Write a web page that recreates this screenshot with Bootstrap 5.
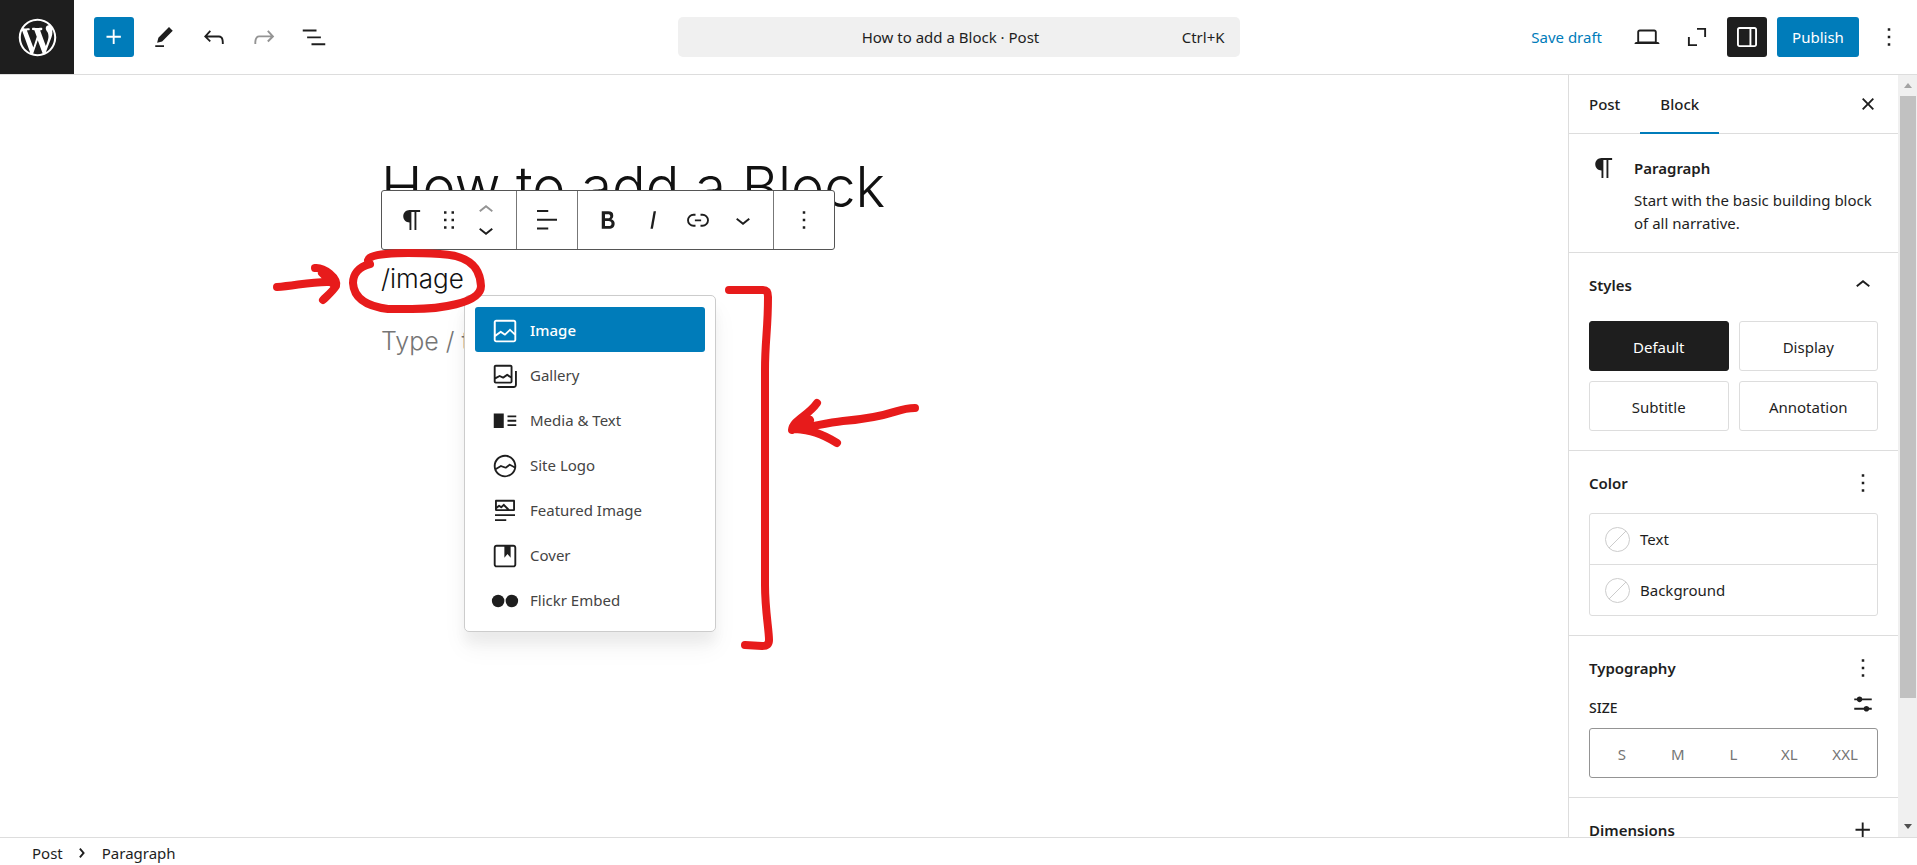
<!DOCTYPE html>
<html lang="en">
<head>
<meta charset="utf-8">
<meta name="viewport" content="width=device-width, initial-scale=1">
<title>How to add a Block · Post</title>
<link href="https://cdn.jsdelivr.net/npm/bootstrap@5.3.0/dist/css/bootstrap.min.css" rel="stylesheet">
<style>
:root{--ink:#1e1e1e;--accent:#007cba;--rule:#ddd}
body{font-family:"Noto Sans","Open Sans",sans-serif;font-size:15px;line-height:23px;color:var(--ink);background:#fff}
.ico{width:30px;height:30px;fill:currentColor;flex:none;display:block}
.topbar{height:75px;border-bottom:1px solid var(--rule)}
.wp-home{width:74px;margin-right:10px;background:var(--ink);color:#fff}
.wp-home svg{width:45px;height:45px;fill:currentColor}
.tool{width:40px;height:40px;padding:0;border:0;border-radius:3px;color:var(--ink);background:none;display:flex;align-items:center;justify-content:center;flex:none}
.tool:disabled{color:#949494}
.tool-accent{background:var(--accent);color:#fff}
.tool-dark{background:var(--ink);color:#fff}
.gap-tools{gap:10px}
.side-group{flex:1 1 0}
.doc-bar{width:562px;height:40px;border:0;border-radius:5px;background:#f0f0f0;color:var(--ink);padding:0 15px;display:grid;grid-template-columns:1fr auto 1fr;align-items:center}
.save-draft{color:var(--accent);padding:0 15px;border:0;background:none}
.publish{background:var(--accent);color:#fff;height:40px;width:82px;padding:0;border:0;border-radius:3px}
.workspace{min-height:0}
.canvas{padding-top:80px;font-family:"Inter",sans-serif;font-weight:300;color:#111}
.column{width:806px;max-width:100%}
.post-title{font-size:56px;line-height:64px;font-weight:300;margin:0 0 41px}
.para{font-size:26px;line-height:38px;margin:0 0 24px}
.para-hint{color:#757575;font-size:25px}
.block-toolbar{left:0;top:35px;height:60px;border:1px solid #555;border-radius:3px;background:#fff;color:var(--ink)}
.block-toolbar .part{display:flex;align-items:center;border-right:1px solid #777;padding:0 8px 0 7px}
.block-toolbar .part:first-child{padding:0 10px}
.block-toolbar .part:last-child{border-right:0}
.block-toolbar .grip{width:34px}
.block-toolbar .mover{width:40px;height:20px;overflow:hidden}
.block-toolbar .fmt{width:45px}
.inserter{left:83px;top:140px;width:252px;padding:11px 10px 9px;border:1px solid #ccc;border-radius:5px;background:#fff;box-shadow:0 12px 12px rgba(0,0,0,.04),0 16px 24px rgba(0,0,0,.05);font-family:"Noto Sans",sans-serif;font-weight:400}
.inserter button{height:45px;border:0;border-radius:3px;background:none;padding:2px 15px 0;color:#444;text-align:left;gap:10px}
.inserter svg{color:var(--ink)}
.inserter .chosen{background:var(--accent);color:#fff;font-weight:500}
.inserter .chosen svg{color:#fff}
.pen-marks{left:-121px;top:70px;width:700px;height:440px;pointer-events:none;fill:none;stroke:#e71b1b;stroke-width:8;stroke-linecap:round;stroke-linejoin:round}
.inspector{width:330px;border-left:1px solid var(--rule);overflow:hidden}
.tabs-row{height:59px;border-bottom:1px solid var(--rule);padding-right:15px}
.tabs-row .tab{height:59px;border:0;border-bottom:2px solid transparent;background:none;padding:3px 20px 0;font-weight:500;color:var(--ink)}
.tabs-row .tab.current{border-bottom-color:var(--accent)}
.panel{padding:20px 20px 19px;border-bottom:1px solid var(--rule)}
.panel h2,.block-card h2{font-size:15px;font-weight:600;margin:0}
.panel-head{height:24px}
.panel-head button,.size-row button{border:0;background:none;padding:0;color:var(--ink)}
.block-card{padding:19px 20px 17px;gap:15px;border-bottom:1px solid var(--rule)}
.block-card h2{line-height:30px;margin-bottom:6px}
.style-grid{margin-top:24px;display:grid;grid-template-columns:1fr 1fr;gap:10px}
.style-grid button{height:50px;border:1px solid var(--rule);border-radius:3px;background:#fff;color:var(--ink);padding:2px 0 0}
.style-grid .chosen{background:var(--ink);border-color:var(--ink);color:#fff}
.swatches{margin-top:18px;border:1px solid var(--rule);border-radius:3px}
.swatches button{height:50px;border:0;background:none;padding:0 15px;gap:10px;color:var(--ink)}
.swatches button:first-child{height:51px;border-bottom:1px solid var(--rule)}
.swatches svg{width:25px;height:25px;fill:none;stroke:#ccc}
.size-row{margin-top:16px;height:24px}
.size-row h3{font-size:14px;font-weight:500;line-height:24px;margin:0}
.sizes{margin-top:8px;height:50px;border:1px solid #949494;border-radius:3px;padding:0 4px}
.sizes label{flex:1;text-align:center;color:#757575;line-height:50px}
.scroller{width:19px;background:#f0f0f0;padding-left:2px}
.scroller .end{height:21px;width:16px;display:flex;align-items:center;justify-content:center}
.scroller .thumb{width:16px;height:79%;background:#c1c1c1}
.crumbs{height:28px;border-top:1px solid var(--rule);padding:4px 0 0 32px}
.crumbs svg{margin:0 5px 2px 4px}
.crumbs a{color:var(--ink);text-decoration:none}
</style>
</head>
<body>
<div class="d-flex flex-column vh-100 overflow-hidden">
  <header class="topbar d-flex align-items-center flex-shrink-0">
    <div class="side-group d-flex align-items-center align-self-stretch gap-tools">
      <a href="#" class="wp-home d-flex align-items-center justify-content-center align-self-stretch" aria-label="View posts"><svg viewBox="-2 -2 24 24"><path d="M20 10c0-5.51-4.49-10-10-10C4.48 0 0 4.49 0 10c0 5.52 4.48 10 10 10 5.51 0 10-4.48 10-10zM7.78 15.37L4.37 6.22c.55-.02 1.17-.08 1.17-.08.5-.06.44-1.13-.06-1.11 0 0-1.45.11-2.37.11-.18 0-.37 0-.58-.01C4.12 2.69 6.87 1.11 10 1.11c2.33 0 4.45.87 6.05 2.34-.68-.11-1.65.39-1.65 1.58 0 .74.45 1.36.9 2.1.35.61.55 1.36.55 2.46 0 1.49-1.4 5-1.4 5l-3.03-8.37c.54-.02.82-.17.82-.17.5-.05.44-1.25-.06-1.22 0 0-1.44.12-2.38.12-.87 0-2.33-.12-2.33-.12-.5-.03-.56 1.2-.06 1.22l.92.08 1.26 3.41zM17.41 10c.24-.64.74-1.87.43-4.25.7 1.29 1.05 2.71 1.05 4.25 0 3.29-1.73 6.24-4.4 7.78.97-2.59 1.94-5.2 2.92-7.78zM6.1 18.09C3.12 16.65 1.11 13.53 1.11 10c0-1.3.23-2.48.72-3.59C3.25 10.3 4.67 14.2 6.1 18.09zm4.03-6.63l2.58 6.98c-.86.29-1.76.45-2.71.45-.79 0-1.57-.11-2.29-.33.81-2.38 1.62-4.74 2.42-7.1z"/></svg></a>
      <button class="tool tool-accent" aria-label="Block inserter"><svg class="ico" viewBox="0 0 24 24"><path d="M11 12.5V17.5H12.5V12.5H17.5V11H12.5V6H11V11H6V12.5H11Z"/></svg></button>
      <button class="tool" aria-label="Tools"><svg class="ico" viewBox="0 0 24 24"><path d="m19 7-3-3-8.5 8.5-1 4 4-1L19 7Zm-7 11.5H5V20h7v-1.5Z"/></svg></button>
      <button class="tool" aria-label="Undo"><svg class="ico" viewBox="0 0 24 24"><path d="M18.3 11.7c-.6-.6-1.4-.9-2.3-.9H6.7l2.9-3.3-1.1-1-4.5 5L8.5 16l1-1-2.7-2.7H16c.5 0 .9.2 1.3.5 1 1 1 3.4 1 4.5v.3h1.5v-.2c0-1.5 0-4.3-1.5-5.7z"/></svg></button>
      <button class="tool" aria-label="Redo" disabled><svg class="ico" viewBox="0 0 24 24"><path d="M15.6 6.5l-1.1 1 2.9 3.3H8c-.9 0-1.7.3-2.3.9-1.4 1.5-1.4 4.2-1.4 5.6v.2h1.5v-.3c0-1.1 0-3.5 1-4.5.3-.3.7-.5 1.3-.5h9.2L14.5 15l1.1 1.1 4.6-4.6-4.6-5z"/></svg></button>
      <button class="tool" aria-label="Document overview"><svg class="ico" viewBox="0 0 24 24"><path d="M3 6h11v1.5H3V6Zm3.5 5.5h11V13h-11v-1.5ZM21 17H10v1.5h11V17Z"/></svg></button>
    </div>
    <button class="doc-bar"><span></span><span class="pe-3">How to add a Block · Post</span><span class="text-end">Ctrl+K</span></button>
    <div class="side-group d-flex align-items-center justify-content-end gap-tools">
      <button class="save-draft">Save draft</button>
      <button class="tool" aria-label="View"><svg class="ico" viewBox="0 0 24 24"><path d="M20.5 16h-.7V8c0-1.1-.9-2-2-2H6.2c-1.1 0-2 .9-2 2v8h-.7c-.8 0-1.5.7-1.5 1.5h20c0-.8-.7-1.5-1.5-1.5zM5.7 8c0-.3.2-.5.5-.5h11.6c.3 0 .5.2.5.5v7.6H5.7V8z"/></svg></button>
      <button class="tool" aria-label="Zoom out"><svg class="ico" viewBox="0 0 24 24"><path d="M12 5.5h6.5V12M5.5 12v6.5H12" fill="none" stroke="currentColor" stroke-width="1.5"/></svg></button>
      <button class="tool tool-dark" aria-label="Settings"><svg class="ico" viewBox="0 0 24 24"><path fill-rule="evenodd" d="M18 4H6c-1.1 0-2 .9-2 2v12c0 1.1.9 2 2 2h12c1.1 0 2-.9 2-2V6c0-1.1-.9-2-2-2zm-4 14.5H6c-.3 0-.5-.2-.5-.5V6c0-.3.2-.5.5-.5h8v13zm4.5-.5c0 .3-.2.5-.5.5h-2.5v-13H18c.3 0 .5.2.5.5v12z"/></svg></button>
      <button class="publish">Publish</button>
      <button class="tool me-2" aria-label="Options"><svg class="ico" viewBox="0 0 24 24"><path d="M13 19h-2v-2h2v2zm0-6h-2v-2h2v2zm0-6h-2V5h2v2z"/></svg></button>
    </div>
  </header>

  <div class="workspace d-flex flex-grow-1">
    <main class="canvas flex-grow-1 overflow-hidden">
      <div class="column position-relative mx-auto">
        <h1 class="post-title">How to add a Block</h1>
        <p class="para">/image</p>
        <p class="para para-hint">Type / to choose a block</p>

        <div class="block-toolbar position-absolute d-flex" role="toolbar" aria-label="Block tools">
          <div class="part">
            <button class="tool" aria-label="Paragraph"><svg class="ico" viewBox="0 0 24 24"><path d="m9.99609 14v-.2251l.00391.0001v6.225h1.5v-14.5h2.5v14.5h1.5v-14.5h3v-1.5h-8.50391c-2.76142 0-5 2.23858-5 5 0 2.7614 2.23858 5 5 5z"/></svg></button>
            <button class="tool grip" aria-label="Drag"><svg class="ico" viewBox="0 0 24 24"><path d="M8 7h2V5H8v2zm0 6h2v-2H8v2zm0 6h2v-2H8v2zm6-14v2h2V5h-2zm0 8h2v-2h-2v2zm0 6h2v-2h-2v2z"/></svg></button>
            <div>
              <button class="tool mover" aria-label="Move up" disabled><svg class="ico" viewBox="0 0 24 24"><path d="M6.5 12.4L12 8l5.5 4.4-.9 1.2L12 10l-4.5 3.6-1-1.2z"/></svg></button>
              <button class="tool mover" aria-label="Move down"><svg class="ico" viewBox="0 0 24 24"><path d="M17.5 11.6L12 16l-5.5-4.4.9-1.2L12 14l4.5-3.6 1 1.2z"/></svg></button>
            </div>
          </div>
          <div class="part">
            <button class="tool fmt" aria-label="Align text"><svg class="ico" viewBox="0 0 24 24"><path d="M13 5.5H4V4h9v1.5Zm7 7H4V11h16v1.5Zm-7 7H4V18h9v1.5Z"/></svg></button>
          </div>
          <div class="part">
            <button class="tool fmt" aria-label="Bold"><svg class="ico" viewBox="0 0 24 24"><path d="M14.7 11.3c1-.6 1.5-1.6 1.5-3 0-2.3-1.3-3.4-4-3.4H7v14h5.8c1.4 0 2.5-.3 3.3-1 .8-.7 1.2-1.7 1.2-2.9.1-1.9-.8-3.1-2.6-3.7zm-5.1-4h2.3c.6 0 1.1.1 1.4.4.3.3.5.7.5 1.2s-.2 1-.5 1.2c-.3.3-.8.4-1.4.4H9.6V7.3zm4.6 9c-.4.3-1 .4-1.7.4H9.6v-3.9h2.9c.7 0 1.3.2 1.7.5.4.3.6.8.6 1.5s-.2 1.2-.6 1.5z"/></svg></button>
            <button class="tool fmt" aria-label="Italic"><svg class="ico" viewBox="0 0 24 24"><path d="M12.5 5L10 19h1.9l2.5-14z"/></svg></button>
            <button class="tool fmt" aria-label="Link"><svg class="ico" viewBox="0 0 24 24"><path d="M10 17.389H8.444A5.194 5.194 0 1 1 8.444 7H10v1.5H8.444a3.694 3.694 0 0 0 0 7.389H10v1.5ZM14 7h1.556a5.194 5.194 0 0 1 0 10.39H14v-1.5h1.556a3.694 3.694 0 0 0 0-7.39H14V7Zm-4.5 6h5v-1.5h-5V13Z"/></svg></button>
            <button class="tool fmt" aria-label="More"><svg class="ico" viewBox="0 0 24 24"><path d="M17.5 11.6L12 16l-5.5-4.4.9-1.2L12 14l4.5-3.6 1 1.2z"/></svg></button>
          </div>
          <div class="part">
            <button class="tool fmt" aria-label="Options"><svg class="ico" viewBox="0 0 24 24"><path d="M13 19h-2v-2h2v2zm0-6h-2v-2h2v2zm0-6h-2V5h2v2z"/></svg></button>
          </div>
        </div>

        <div class="inserter position-absolute d-flex flex-column">
          <button class="chosen d-flex align-items-center"><svg class="ico" viewBox="0 0 24 24"><path d="M19 3H5c-1.1 0-2 .9-2 2v14c0 1.1.9 2 2 2h14c1.1 0 2-.9 2-2V5c0-1.1-.9-2-2-2zM5 4.5h14c.3 0 .5.2.5.5v8.4l-3-2.9c-.3-.3-.8-.3-1 0L11.9 14 9 12c-.3-.2-.6-.2-.8 0l-3.6 2.6V5c-.1-.3.1-.5.4-.5zm14 15H5c-.3 0-.5-.2-.5-.5v-2.4l4.1-3 3 1.9c.3.2.7.2.9-.1L16 12l3.5 3.4V19c0 .3-.2.5-.5.5z"/></svg>Image</button>
          <button class="d-flex align-items-center"><svg class="ico" viewBox="0 0 24 24"><path fill-rule="evenodd" d="M16.375 4.5H4.625a.125.125 0 0 0-.125.125v8.254l2.859-1.54a.75.75 0 0 1 .68-.016l2.384 1.142 2.89-2.074a.75.75 0 0 1 .874 0l2.313 1.66V4.625a.125.125 0 0 0-.125-.125Zm.125 9.398-2.75-1.975-2.813 2.02a.75.75 0 0 1-.76.067l-2.444-1.17L4.5 14.583v1.792c0 .069.056.125.125.125h11.75a.125.125 0 0 0 .125-.125v-2.477ZM4.625 3C3.728 3 3 3.728 3 4.625v11.75C3 17.273 3.728 18 4.625 18h11.75c.898 0 1.625-.727 1.625-1.625V4.625C18 3.728 17.273 3 16.375 3H4.625ZM20 8v11c0 .69-.31 1-.999 1H6v1.5h13.001c1.52 0 2.499-.982 2.499-2.5V8H20Z"/></svg>Gallery</button>
          <button class="d-flex align-items-center"><svg class="ico" viewBox="0 0 24 24"><path d="M3 6v11.5h8V6H3Zm11 3h7V7.5h-7V9Zm7 3.5h-7V11h7v1.5ZM14 16h7v-1.5h-7V16Z"/></svg>Media &amp; Text</button>
          <button class="d-flex align-items-center"><svg class="ico" viewBox="0 0 24 24"><path d="M12 3c-5 0-9 4-9 9s4 9 9 9 9-4 9-9-4-9-9-9zm0 1.5c4.1 0 7.5 3.4 7.5 7.5v.1c-1.4-.8-3.3-1.7-3.4-1.8-.2-.1-.5-.1-.8.1l-2.9 2.1L9 11.3c-.2-.1-.4 0-.6.1l-3.7 2.2c-.1-.5-.2-1-.2-1.5 0-4.2 3.4-7.6 7.5-7.6zm0 15c-3.1 0-5.7-1.9-6.9-4.5l3.7-2.2 3.5 1.2c.2.1.5 0 .7-.1l2.9-2.1c.8.4 2.5 1.2 3.5 1.9-.9 3.3-3.9 5.8-7.4 5.8z"/></svg>Site Logo</button>
          <button class="d-flex align-items-center"><svg class="ico" viewBox="0 0 24 24"><path d="M19 3H5c-.6 0-1 .4-1 1v7c0 .5.4 1 1 1h14c.5 0 1-.4 1-1V4c0-.6-.4-1-1-1zM5.5 10.5v-.4l1.8-1.3 1.3.8c.3.2.7.2.9-.1L11 8.1l2.4 2.4H5.5zm13 0h-2.9l-4-4c-.3-.3-.8-.3-1.1 0L8.9 8l-1.2-.8c-.3-.2-.6-.2-.9 0l-1.3 1V4.5h13v6zM4 20h9v-1.5H4V20zm0-4h16v-1.5H4V16z"/></svg>Featured Image</button>
          <button class="d-flex align-items-center"><svg class="ico" viewBox="0 0 24 24"><path d="M18.7 3H5.3C4 3 3 4 3 5.3v13.4C3 20 4 21 5.3 21h13.4c1.3 0 2.3-1 2.3-2.3V5.3C21 4 20 3 18.7 3zm.8 15.7c0 .4-.4.8-.8.8H5.3c-.4 0-.8-.4-.8-.8V5.3c0-.4.4-.8.8-.8h6.2v8.9l2.5-3.1 2.5 3.1V4.5h2.2c.4 0 .8.4.8.8v13.4z"/></svg>Cover</button>
          <button class="d-flex align-items-center"><svg class="ico" viewBox="0 0 24 24"><circle cx="6.5" cy="12" r="5"/><circle cx="17.5" cy="12" r="5"/></svg>Flickr Embed</button>
        </div>

        <svg class="pen-marks position-absolute" viewBox="260 225 700 440" aria-hidden="true">
          <path d="M277 287C295 286 312 281 331 282M315 268C324 267 338 278 336 286C333 291 327 296 323 300M322 273L333 284"/>
          <path d="M370 264C358 267 353 275 353 283C354 301 372 307 388 309H412C437 309 481 304 481 286C480 262 462 255 440 254C420 253 370 251 368 260"/>
          <path d="M729 290H763Q768 290 768 297C768 330 765 340 765 370V585C765 610 769 630 769 640Q769 646 762 646L745 645"/>
          <path d="M915 408C895 408 895 417 843 421C825 423 812 427 795 429C810 430 821 433 837 443M817 403C808 416 793 420 792 430L810 420"/>
        </svg>
      </div>
    </main>

    <aside class="inspector flex-shrink-0">
      <div class="tabs-row d-flex align-items-center">
        <button class="tab">Post</button>
        <button class="tab current">Block</button>
        <button class="tool ms-auto w-auto" aria-label="Close settings"><svg class="ico" viewBox="0 0 24 24"><path d="M12 13.06l3.712 3.713 1.061-1.06L13.061 12l3.712-3.712-1.06-1.06L12 10.938 8.288 7.227l-1.061 1.06L10.939 12l-3.712 3.712 1.06 1.061L12 13.061z"/></svg></button>
      </div>
      <div class="block-card d-flex">
        <svg class="ico" viewBox="0 0 24 24"><path d="m9.99609 14v-.2251l.00391.0001v6.225h1.5v-14.5h2.5v14.5h1.5v-14.5h3v-1.5h-8.50391c-2.76142 0-5 2.23858-5 5 0 2.7614 2.23858 5 5 5z"/></svg>
        <div><h2>Paragraph</h2>Start with the basic building block of all narrative.</div>
      </div>
      <section class="panel">
        <div class="panel-head d-flex align-items-center justify-content-between"><h2>Styles</h2><button aria-label="Collapse Styles"><svg class="ico" viewBox="0 0 24 24"><path d="M6.5 12.4L12 8l5.5 4.4-.9 1.2L12 10l-4.5 3.6-1-1.2z"/></svg></button></div>
        <div class="style-grid">
          <button class="chosen">Default</button><button>Display</button>
          <button>Subtitle</button><button>Annotation</button>
        </div>
      </section>
      <section class="panel">
        <div class="panel-head d-flex align-items-center justify-content-between"><h2>Color</h2><button aria-label="Color options"><svg class="ico" viewBox="0 0 24 24"><path d="M13 19h-2v-2h2v2zm0-6h-2v-2h2v2zm0-6h-2V5h2v2z"/></svg></button></div>
        <div class="swatches d-flex flex-column">
          <button class="d-flex align-items-center"><svg viewBox="0 0 25 25"><circle cx="12.5" cy="12.5" r="12"/><path d="M4 21 21 4"/></svg>Text</button>
          <button class="d-flex align-items-center"><svg viewBox="0 0 25 25"><circle cx="12.5" cy="12.5" r="12"/><path d="M4 21 21 4"/></svg>Background</button>
        </div>
      </section>
      <section class="panel">
        <div class="panel-head d-flex align-items-center justify-content-between"><h2>Typography</h2><button aria-label="Typography options"><svg class="ico" viewBox="0 0 24 24"><path d="M13 19h-2v-2h2v2zm0-6h-2v-2h2v2zm0-6h-2V5h2v2z"/></svg></button></div>
        <div class="size-row d-flex justify-content-between"><h3>SIZE</h3><button class="d-flex align-items-center pb-2" aria-label="Set custom size"><svg class="ico" viewBox="0 0 24 24"><path d="m19 7.5h-7.628c-.3089-.87389-1.1423-1.5-2.122-1.5-.97966 0-1.81309.62611-2.12197 1.5h-2.12803v1.5h2.12803c.30888.87389 1.14231 1.5 2.12197 1.5.9797 0 1.8131-.62611 2.122-1.5h7.628zM19 15h-2.128c-.3089-.8739-1.1423-1.5-2.122-1.5s-1.8131.6261-2.122 1.5h-7.628v1.5h7.628c.3089.8739 1.1423 1.5 2.122 1.5s1.8131-.6261 2.122-1.5h2.128z"/></svg></button></div>
        <div class="sizes d-flex position-relative">
          <input class="btn-check" type="radio" name="size" id="sz-s"><label for="sz-s">S</label>
          <input class="btn-check" type="radio" name="size" id="sz-m"><label for="sz-m">M</label>
          <input class="btn-check" type="radio" name="size" id="sz-l"><label for="sz-l">L</label>
          <input class="btn-check" type="radio" name="size" id="sz-xl"><label for="sz-xl">XL</label>
          <input class="btn-check" type="radio" name="size" id="sz-xxl"><label for="sz-xxl">XXL</label>
        </div>
      </section>
      <section class="panel">
        <div class="panel-head d-flex align-items-center justify-content-between"><h2>Dimensions</h2><button aria-label="Dimensions options"><svg class="ico" viewBox="0 0 24 24"><path d="M11 12.5V17.5H12.5V12.5H17.5V11H12.5V6H11V11H6V12.5H11Z"/></svg></button></div>
      </section>
    </aside>
    <div class="scroller d-flex flex-column flex-shrink-0" aria-hidden="true">
      <div class="end"><svg width="8" height="5"><path d="M0 5 4 0l4 5z" fill="#a3a3a3"/></svg></div>
      <div class="thumb"></div>
      <div class="end mt-auto"><svg width="8" height="5"><path d="M0 0h8L4 5z" fill="#505050"/></svg></div>
    </div>
  </div>

  <nav class="crumbs d-flex align-items-center flex-shrink-0" aria-label="Block breadcrumb">
    <a href="#">Post</a>
    <svg class="ico" viewBox="0 0 24 24"><path d="M10.8622 8.04053L14.2805 12.0286L10.8622 16.0167L9.72327 15.0405L12.3049 12.0286L9.72327 9.01672L10.8622 8.04053Z"/></svg>
    <a href="#">Paragraph</a>
  </nav>
</div>
<script src="https://cdn.jsdelivr.net/npm/bootstrap@5.3.0/dist/js/bootstrap.bundle.min.js"></script>
</body>
</html>
